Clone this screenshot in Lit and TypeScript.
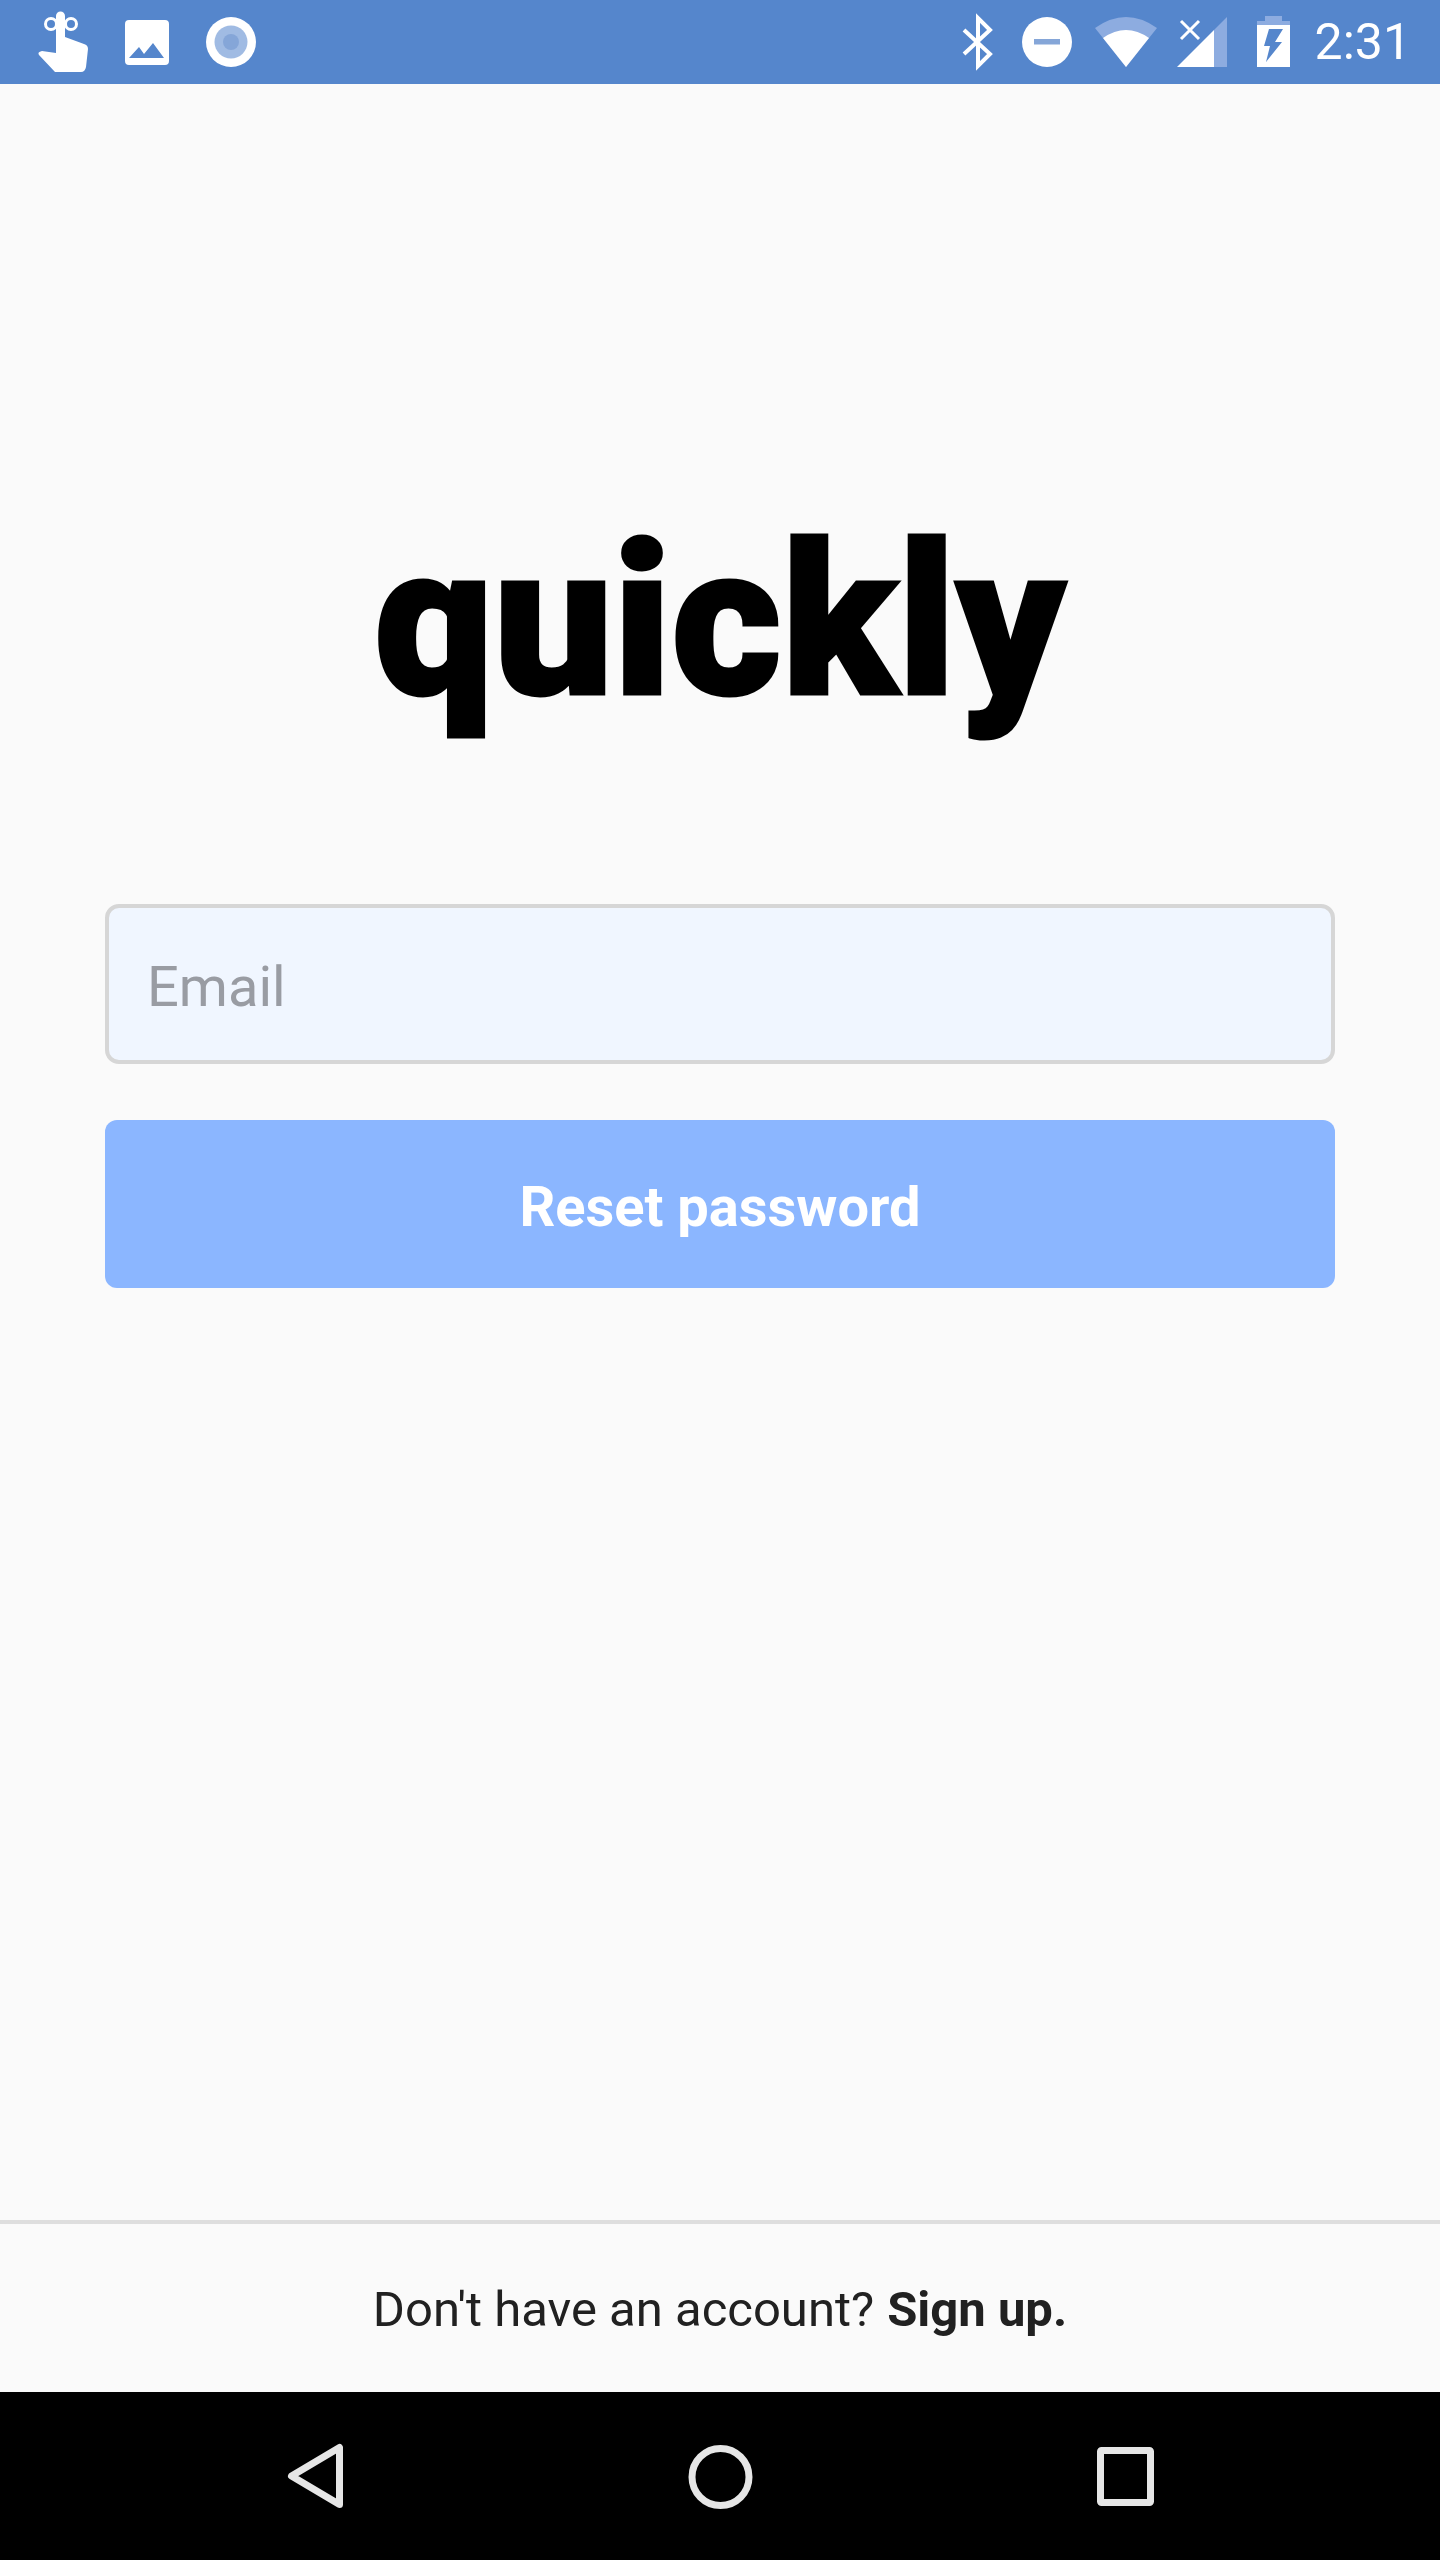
import { LitElement, html, css, svg } from 'lit';
import { customElement } from 'lit/decorators.js';

const BOLT = 'M1269 29 H1283 L1275 42 H1282 L1266 62 L1270 46 H1264 Z';

@customElement('status-bar')
export class StatusBar extends LitElement {
  static styles = css`
    :host {
      display: flex;
      align-items: center;
      justify-content: space-between;
      height: 84px;
      background: #5586cc;
      color: #fff;
    }

    .group {
      display: flex;
      align-items: center;
    }

    .left {
      gap: 36px;
      padding-left: 36px;
    }

    .right {
      padding-right: 29px;
    }

    svg {
      display: block;
      fill: #fff;
    }

    .time {
      font-family: Roboto, sans-serif;
      font-size: 50px;
      line-height: 84px;
      margin-left: 27px;
    }
  `;

  render() {
    return html`
      <div class="group left">
        <svg width="53" height="62" viewBox="36 11 53 62">
          <circle cx="51" cy="24" r="5.5" fill="none" stroke="#fff" stroke-width="3"></circle>
          <circle cx="71" cy="24" r="5.5" fill="none" stroke="#fff" stroke-width="3"></circle>
          <path d="M56 16 a4.5 4.5 0 0 1 9 0 V37 L84 44 Q88 45 88 49 L86 67 Q85 72 81 72 H55 L39 55 Q37 52 42 51 L56 53 Z"></path>
        </svg>
        <svg width="45" height="45" viewBox="125 19 45 45">
          <path fill-rule="evenodd" d="M129 19 H165 a4 4 0 0 1 4 4 V60 a4 4 0 0 1 -4 4 H129 a4 4 0 0 1 -4 -4 V23 a4 4 0 0 1 4 -4 Z M129 57 H164 L153 42 L144 53 L139 46 Z"></path>
        </svg>
        <svg width="50" height="50" viewBox="206 17 50 50">
          <circle cx="231" cy="42" r="25"></circle>
          <circle cx="231" cy="42" r="16.5" fill="#a0bbe3"></circle>
          <circle cx="231" cy="42" r="8" fill="#85a6d8"></circle>
        </svg>
      </div>
      <div class="group right">
        <svg width="328" height="52" viewBox="960 16 328 52" style="overflow:visible">
          ${svg`
            <path d="M964 30 L990 54 L978 66 V18 L990 30 L964 54" fill="none" stroke="#fff" stroke-width="4"></path>
            <circle cx="1047" cy="42" r="25"></circle>
            <rect x="1034" y="39" width="26" height="5.5" fill="#85a6d8"></rect>
            <path d="M1095 28 Q1126 6 1157 28 L1126 67 Z" fill="#8dace0"></path>
            <path d="M1103 38 Q1126 22 1149 38 L1126 67 Z"></path>
            <path d="M1227 17 V67 H1214 V30 Z" fill="#8dace0"></path>
            <path d="M1214 30 V67 H1177 Z"></path>
            <path d="M1181 21 L1199 39 M1199 21 L1181 39" stroke="#fff" stroke-width="3" fill="none"></path>
            <path d="M1265 16 H1282 V21 H1290 V25 H1257 V21 H1265 Z" fill="#8dace0"></path>
            <path fill-rule="evenodd" d="M1257 25 H1290 V67 H1257 Z ${BOLT}"></path>
          `}
        </svg>
        <span class="time">2:31</span>
      </div>
    `;
  }
}

@customElement('nav-bar')
export class NavBar extends LitElement {
  static styles = css`
    :host {
      display: block;
      height: 168px;
      background: #000;
    }

    svg {
      display: block;
    }
  `;

  render() {
    return html`
      <svg width="1440" height="168" viewBox="0 2392 1440 168" fill="none" stroke="#e6e6e6" stroke-width="7" stroke-linejoin="round">
        <path d="M339.5 2447.5 V2504.5 L291.5 2476 Z"></path>
        <circle cx="720.5" cy="2477" r="28.5"></circle>
        <rect x="1100.5" y="2450.5" width="50" height="52" rx="1"></rect>
      </svg>
    `;
  }
}

@customElement('app-root')
export class AppRoot extends LitElement {
  static styles = css`
    :host {
      display: flex;
      flex-direction: column;
      height: 2560px;
      background: #fafafa;
      font-family: Roboto, sans-serif;
    }

    .main {
      flex: 1;
      padding: 0 105px;
      display: flex;
      flex-direction: column;
    }

    .logo {
      box-sizing: border-box;
      height: 820px;
      padding-top: 388px;
      display: flex;
      justify-content: center;
      font-family: Roboto, sans-serif;
      font-weight: 900;
      font-size: 212px;
      line-height: 300px;
      color: #000;
      -webkit-text-stroke: 3px #000;
    }

    .email {
      box-sizing: border-box;
      display: block;
      width: 100%;
      height: 160px;
      padding: 5px 38px 0;
      border: 4px solid #d6d6d6;
      border-radius: 14px;
      background: #f0f6ff;
      font-family: Roboto, sans-serif;
      font-size: 56px;
      outline: none;
    }

    .email::placeholder {
      color: #999ca3;
      opacity: 1;
    }

    .reset {
      display: block;
      width: 100%;
      height: 168px;
      margin-top: 56px;
      padding: 5px 0 0;
      border: none;
      border-radius: 12px;
      background: #8bb6ff;
      color: #fff;
      font-family: Roboto, sans-serif;
      font-size: 56px;
      font-weight: 700;
    }

    .footer {
      box-sizing: border-box;
      height: 172px;
      padding-top: 2px;
      border-top: 4px solid #dedede;
      display: flex;
      align-items: center;
      justify-content: center;
      font-size: 49px;
      color: #212121;
    }

    .footer b {
      font-weight: 700;
      margin-left: 13px;
    }
  `;

  render() {
    return html`
      <status-bar></status-bar>
      <div class="main">
        <div class="logo">quickly</div>
        <input class="email" type="email" placeholder="Email" />
        <button class="reset">Reset password</button>
      </div>
      <div class="footer"><span>Don't have an account?</span><b>Sign up.</b></div>
      <nav-bar></nav-bar>
    `;
  }
}
